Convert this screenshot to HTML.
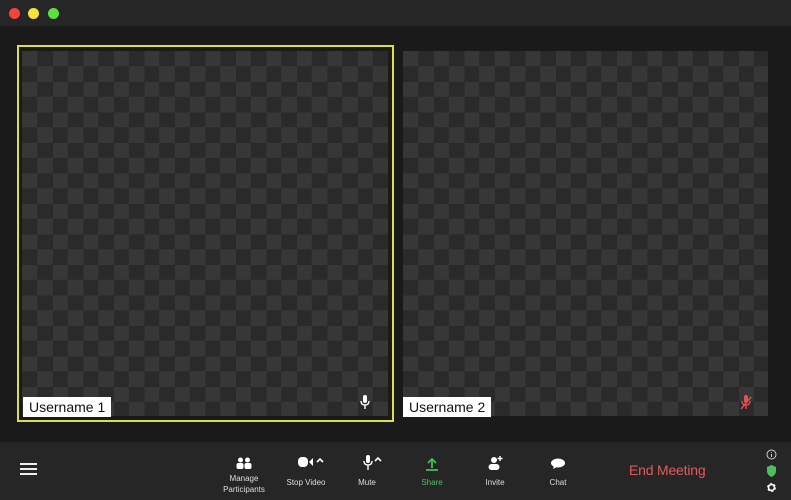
<!DOCTYPE html>
<html><head><style>
*{margin:0;padding:0;box-sizing:border-box}
body{width:791px;height:500px;background:#1a1a1a;position:relative;overflow:hidden;font-family:"Liberation Sans",sans-serif}
.title{position:absolute;left:0;top:0;width:791px;height:26px;background:#262626}
.dot{position:absolute;top:8px;width:11px;height:11px;border-radius:50%}
.chk{position:absolute;background-color:#2a2a2a;background-image:linear-gradient(45deg,#373737 25%,transparent 25%,transparent 75%,#373737 75%),linear-gradient(45deg,#373737 25%,transparent 25%,transparent 75%,#373737 75%);background-size:30.5px 30.5px;background-position:15.25px 0,0 15.25px}
.name{position:absolute;background:#fff;color:#111;font-size:14px;padding:1px 6px;height:20px;line-height:19px}
.bar{position:absolute;left:0;top:442px;width:791px;height:58px;background:#262626}
.lbl{position:absolute;color:#ddd;font-size:8px;text-align:center;width:80px}
</style></head><body>
<div class="title"></div>
<div class="dot" style="left:9px;background:#f1453d"></div>
<div class="dot" style="left:28px;background:#f5e33c"></div>
<div class="dot" style="left:48px;background:#5ee040"></div>
<div style="position:absolute;left:17px;top:45px;width:377px;height:377px;border:2px solid #d9dd5a"></div>
<div class="chk" style="left:22px;top:51px;width:366px;height:365px"></div>
<div class="chk" style="left:403px;top:51px;width:365px;height:365px"></div>
<div class="name" style="left:23px;top:397px">Username 1</div>
<div class="name" style="left:403px;top:397px">Username 2</div>
<svg style="position:absolute;left:360px;top:395px" width="10" height="16" viewBox="0 0 10 16"><rect x="3" y="0" width="4" height="8" rx="2" fill="#fff"/><path d="M1 6q0 4 4 4q4 0 4-4M5 10v4" stroke="#fff" stroke-width="1.4" fill="none"/></svg>
<svg style="position:absolute;left:740px;top:395px" width="12" height="16" viewBox="0 0 12 16"><rect x="4" y="0" width="4" height="8" rx="2" fill="#e05050"/><path d="M2 6q0 4 4 4q4 0 4-4M6 10v4M1 14L11 2" stroke="#e05050" stroke-width="1.4" fill="none"/></svg>
<div class="bar"></div>
<div style="position:absolute;left:20px;top:463px;width:17px;height:2px;background:#eee;box-shadow:0 5px 0 #eee,0 10px 0 #eee"></div>
<svg style="position:absolute;left:236px;top:457px" width="16" height="12" viewBox="0 0 16 12"><circle cx="4.5" cy="3" r="2.5" fill="#fff"/><circle cx="11.5" cy="3" r="2.5" fill="#fff"/><rect x="0.5" y="6" width="7" height="6" rx="2" fill="#fff"/><rect x="8.5" y="6" width="7" height="6" rx="2" fill="#fff"/></svg>
<div class="lbl" style="left:204px;top:473px;line-height:11px">Manage<br>Participants</div>
<svg style="position:absolute;left:298px;top:456px" width="28" height="12" viewBox="0 0 28 12"><rect x="0" y="1" width="10" height="10" rx="4" fill="#fff"/><path d="M11 6L15 2v8z" fill="#fff"/><path d="M19 6l3-3 3 3" stroke="#fff" stroke-width="1.6" fill="none"/></svg>
<div class="lbl" style="left:266px;top:478px">Stop Video</div>
<svg style="position:absolute;left:362px;top:455px" width="22" height="16" viewBox="0 0 22 16"><rect x="4" y="0" width="4" height="8" rx="2" fill="#fff"/><path d="M2 6q0 4 4 4q4 0 4-4M6 10v5" stroke="#fff" stroke-width="1.4" fill="none"/><path d="M13 6l3-3 3 3" stroke="#fff" stroke-width="1.6" fill="none"/></svg>
<div class="lbl" style="left:327px;top:478px">Mute</div>
<svg style="position:absolute;left:425px;top:457px" width="14" height="14" viewBox="0 0 14 14"><path d="M7 11V2M3 6l4-4 4 4M1 13h12" stroke="#3fbf5a" stroke-width="1.8" fill="none"/></svg>
<div class="lbl" style="left:392px;top:478px;color:#4cc060">Share</div>
<svg style="position:absolute;left:488px;top:455px" width="16" height="15" viewBox="0 0 16 15"><circle cx="6" cy="5" r="3" fill="#fff"/><rect x="0.5" y="9" width="11" height="6" rx="3" fill="#fff"/><path d="M12 1v5M9.5 3.5h5" stroke="#fff" stroke-width="1.4"/></svg>
<div class="lbl" style="left:455px;top:478px">Invite</div>
<svg style="position:absolute;left:550px;top:458px" width="16" height="12" viewBox="0 0 16 12"><ellipse cx="8" cy="5" rx="7" ry="4.5" fill="#fff"/><path d="M4 8l-1 3 4-2z" fill="#fff"/></svg>
<div class="lbl" style="left:518px;top:478px">Chat</div>
<div style="position:absolute;left:629px;top:462px;color:#e25a5a;font-size:14px;letter-spacing:-0.2px">End Meeting</div>
<svg style="position:absolute;left:766px;top:449px" width="11" height="11" viewBox="0 0 11 11"><circle cx="5.5" cy="5.5" r="4.5" stroke="#ccc" fill="none"/><path d="M5.5 5v3M5.5 3v.8" stroke="#ccc"/></svg>
<svg style="position:absolute;left:766px;top:465px" width="11" height="12" viewBox="0 0 11 12"><path d="M5.5 0L10 2v4q0 4-4.5 6Q1 10 1 6V2z" fill="#4cc060"/></svg>
<svg style="position:absolute;left:766px;top:482px" width="11" height="11" viewBox="0 0 11 11"><circle cx="5.5" cy="5.5" r="3.3" stroke="#fff" stroke-width="2.2" fill="none" stroke-dasharray="2 1.5"/><circle cx="5.5" cy="5.5" r="3" stroke="#fff" stroke-width="1.4" fill="none"/></svg>
</body></html>
